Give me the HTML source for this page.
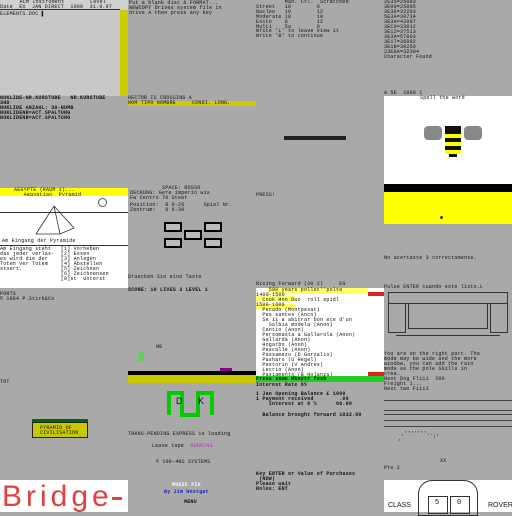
<!DOCTYPE html>
<html><head><meta charset="utf-8"><style>
body{margin:0;width:512px;height:512px;background:#a9a9a9;position:relative;overflow:hidden;font-family:"Liberation Mono",monospace;font-size:5px;line-height:5px;color:#111}
div{position:absolute;white-space:pre}
.t{font-size:5px;letter-spacing:0.2px}
.b{font-weight:bold}
</style></head><body>
<!-- tile 0,0 -->
<div style="left:0;top:0;width:120px;height:96px;background:#c8c8c8"></div>
<div style="left:120px;top:10px;width:8px;height:86px;background:#cccc00"></div>
<div style="left:0;top:0;width:128px;height:10px;background:#d0d0d0"></div>
<div class="t" style="left:10px;top:0">   ACM Instrument        Level</div>
<div class="t" style="left:0;top:5px">Date  EX  JAN DIRECT  1000  31.9.97</div>
<div style="left:0;top:9px;width:120px;height:1px;background:#333"></div>
<div class="t" style="left:0;top:12px">ELEMENTS.DOC ▌</div>
<!-- tile 1,0 -->
<div class="t" style="left:129px;top:1px">Put a blank disc & FORMAT...
NEWCOPY Drives system file in
drive A then press any key</div>
<!-- tile 2,0 -->
<div class="t" style="left:256px;top:0">         Man. Ctl.  Scratched
Street   18        0
Nucleo   19        12
Moderate 18        10
Exito    8         12
Multi    5a        0</div>
<div class="t" style="left:256px;top:29px">Write 'L' to leave view it
Write 'B' to continue</div>
<div style="left:284px;top:136px;width:62px;height:4px;background:#222"></div>
<div class="t" style="left:256px;top:193px">PRESS!</div>
<!-- tile 3,0 -->
<div class="t" style="left:384px;top:0">2E35=25003
3E00=25005
3E36=32203
5E3A=30734
3E3A=42007
3EC0=33012
3E12=37513
3E3A=57003
3E17=36002
3E1B=30250
23E8A=32304
Character Found</div>
<div class="t" style="left:384px;top:91px">A 5E  1000 1</div>
<div style="left:384px;top:96px;width:128px;height:88px;background:#fff"></div>
<div class="t" style="left:420px;top:96px">Spell the word</div>
<!-- bee -->
<div style="left:424px;top:126px;width:18px;height:14px;background:#888;border-radius:4px"></div>
<div style="left:464px;top:126px;width:18px;height:14px;background:#888;border-radius:4px"></div>
<div style="left:445px;top:126px;width:16px;height:8px;background:#111"></div>
<div style="left:445px;top:134px;width:16px;height:4px;background:#ff0"></div>
<div style="left:445px;top:138px;width:16px;height:4px;background:#111"></div>
<div style="left:445px;top:142px;width:16px;height:4px;background:#ff0"></div>
<div style="left:445px;top:146px;width:16px;height:4px;background:#111"></div>
<div style="left:445px;top:150px;width:16px;height:4px;background:#ff0"></div>
<div style="left:449px;top:154px;width:8px;height:3px;background:#111"></div>
<div style="left:384px;top:184px;width:128px;height:8px;background:#000"></div>
<div style="left:384px;top:192px;width:128px;height:32px;background:#ffff00"></div>
<div style="left:440px;top:216px;width:3px;height:3px;background:#333;border-radius:50%"></div>
<!-- tile 0,1 -->
<div class="t b" style="left:0;top:96px">NUKLIDE-NR.KURSTUBE   NR.KURSTUBE
3HD
NUKLIDE ANZAHL: 30-NUMB
NUKLIDENR=ACT.SPALTUNG
NUKLIDENR=ACT.SPALTUNG</div>
<!-- tile 1,1 -->
<div class="t" style="left:128px;top:96px">HECTOR IS CROSSING A</div>
<div style="left:128px;top:101px;width:128px;height:5px;background:#cccc00"></div>
<div class="t" style="left:128px;top:101px">NOM TIPO NOMBRE     CONDI. LONG.</div>
<!-- tile 0,2 -->
<div style="left:0;top:188px;width:128px;height:8px;background:#ffff00"></div>
<div class="t" style="left:14px;top:188px">AEGYPTE (RAUM 1)...
   Aegyptian  Pyramid</div>
<div style="left:0;top:196px;width:128px;height:92px;background:#fff"></div>
<div style="left:0;top:212px;width:128px;height:1px;background:#333"></div>
<div style="left:98px;top:198px;width:7px;height:7px;border:1px solid #555;border-radius:50%"></div>
<svg style="position:absolute;left:30px;top:200px" width="50" height="36"><path d="M24 6 L6 34 L30 34 Z M24 6 L44 28 L30 34" stroke="#333" fill="none" stroke-width="0.8"/></svg>
<div class="t" style="left:2px;top:239px">Am Eingang der Pyramide</div>
<div style="left:0;top:245px;width:128px;height:1px;background:#333"></div>
<div class="t" style="left:0;top:247px">Am Eingang steht   [1] Vorheben
das jeder verlas-  [2] Essen
es wird die der    [3] Anlegen
Toten ver Totem    [4] Abstellen
stoert.            [5] Zeichnen
                   [6] Zeichnensen
                   [0]st  Unterst</div>
<!-- tile 1,2 -->
<div class="t" style="left:130px;top:186px">          SPACE: ROSSO
DECKUNG: Gere imperio wis
Fw Centro 70 Steer</div>
<div class="t" style="left:130px;top:203px">Position:  8 6-26      Spiel Nr.
Zentrum:   8 6-30</div>
<div style="left:164px;top:222px;width:14px;height:6px;border:2px solid #000;background:#bbb"></div>
<div style="left:204px;top:222px;width:14px;height:6px;border:2px solid #000;background:#bbb"></div>
<div style="left:184px;top:230px;width:14px;height:6px;border:2px solid #000;background:#bbb"></div>
<div style="left:164px;top:238px;width:14px;height:6px;border:2px solid #000;background:#bbb"></div>
<div style="left:204px;top:238px;width:14px;height:6px;border:2px solid #000;background:#bbb"></div>
<div class="t" style="left:128px;top:275px">Druecken Sie eine Taste</div>
<div class="t b" style="left:128px;top:288px">SCORE: 10 LIVES 3 LEVEL 1</div>
<div class="t" style="left:156px;top:345px">NE</div>
<div style="left:128px;top:371px;width:128px;height:4px;background:#000"></div>
<div style="left:128px;top:375px;width:128px;height:8px;background:#c8c800"></div>
<div style="left:220px;top:368px;width:12px;height:3px;background:#900090"></div>
<div style="left:138px;top:352px;width:6px;height:10px;background:#6c6"></div>
<svg style="position:absolute;left:166px;top:390px" width="50" height="28"><path d="M3 25 V3 H16 V25 H32 V3 H46 V25" stroke="#00cc00" stroke-width="4" fill="none"/></svg>
<div style="left:176px;top:397px;font-family:'Liberation Sans',sans-serif;font-size:9px;line-height:9px">D</div>
<div style="left:198px;top:397px;font-family:'Liberation Sans',sans-serif;font-size:9px;line-height:9px">K</div>
<div class="t" style="left:128px;top:432px">TRANS-PENDING EXPRESS is loading</div>
<div class="t" style="left:152px;top:444px">Leave tape  <span style="color:#a040a0">RUNNING</span></div>
<div class="t" style="left:156px;top:460px">© 198-4NS SYSTEMS</div>
<div class="t b" style="left:172px;top:483px;color:#fff">MUSIC FIX</div>
<div class="t b" style="left:164px;top:490px;color:#2020c0">By Jim Westgat</div>
<div class="t b" style="left:184px;top:500px">MENU</div>
<!-- tile 0,3 -->
<div class="t" style="left:0;top:292px">PORTS
© 1984 P.Stirk&Co</div>
<div class="t" style="left:0;top:380px">TOT</div>
<div style="left:32px;top:419px;width:56px;height:3px;background:#060"></div>
<div style="left:32px;top:422px;width:56px;height:16px;background:#c8c800;border:1px solid #222;box-sizing:border-box"></div>
<div class="t" style="left:40px;top:426px">PYRAMID OF
CIVILISATION</div>
<div style="left:0;top:480px;width:128px;height:32px;background:#fff"></div>
<div style="left:2px;top:482px;font-family:'Liberation Sans',sans-serif;font-size:30px;line-height:30px;letter-spacing:4px;color:#e04040">Bridge</div>
<div style="left:112px;top:497px;width:10px;height:3px;background:#e04040"></div>
<!-- tile 2,2 -->
<div class="t" style="left:256px;top:282px">Rising Forward (20 2)     EG</div>
<div style="left:256px;top:288px;width:128px;height:88px;background:#fff"></div>
<div style="left:268px;top:288px;width:100px;height:6px;background:#ffff66"></div>
<div style="left:368px;top:292px;width:16px;height:4px;background:#e02020"></div>
<div style="left:256px;top:296px;width:40px;height:5px;background:#ffff66"></div>
<div style="left:256px;top:304px;width:40px;height:5px;background:#ffff66"></div>
<div class="t" style="left:256px;top:288px">    500 years pollst''polte
1400-1500
  Cook Hon Duo  roll epidl
1500-1600
  Pecado (Montpesat)
  Pes santes (Ancn)
  Se ii a abitrar bon ece d'un
    Salbia modela (Anon)
  Cantio (Anon)
  Persomasta a Gallarola (Anon)
  Gallarda (Anon)
  Hogarbo (Anon)
  Pascalle (Anon)
  Passamezo (D Gorzalio)
  Pasharo (U Hegel)
  Pestorin (V Andres)
  Lecrio (Anon)
  Pasiamento (B Holanza)
  Pertenia (L de Maratan)</div>
<div style="left:256px;top:376px;width:128px;height:6px;background:#22cc22"></div>
<div style="left:368px;top:372px;width:16px;height:4px;background:#e02020"></div>
<div class="t b" style="left:256px;top:377px">Press some Mkeytr fosh</div>
<div class="t b" style="left:256px;top:383px">Interest Rate 6%</div>
<div class="t b" style="left:256px;top:392px">1 Jan Opening Balance £ 1000
1 Payment received        .00
    Interest at 6 %      60.00</div>
<div class="t b" style="left:256px;top:413px">  Balance brought forward 1032.00</div>
<div class="t b" style="left:256px;top:472px">Key ENTER or Value of Purchases
 (NOW)
Please wait
Roles: ENT</div>
<!-- tile 3,2 -->
<div class="t" style="left:384px;top:256px">No acertaste 3 correctamente.</div>
<div class="t" style="left:384px;top:285px">Pulse ENTER cuando este listo.L</div>
<div style="left:388px;top:292px;width:118px;height:10px;border:1px solid #333"></div>
<div style="left:388px;top:303px;width:16px;height:28px;border:1px solid #333"></div>
<div style="left:490px;top:303px;width:16px;height:28px;border:1px solid #333"></div>
<div style="left:408px;top:303px;width:78px;height:24px;border:1px solid #333"></div>
<div style="left:396px;top:335px;width:104px;height:1px;background:#333"></div>
<div class="t" style="left:384px;top:352px">You are on the right part. The
mode may be wide and the more
window, you can add the rain
mode as the pole Skills in
crea.
Next Dog Fliii  200
Freight 1...
Next two Fiiii</div>
<div style="left:384px;top:400px;width:128px;height:1px;background:#444"></div>
<div style="left:384px;top:410px;width:128px;height:1px;background:#444"></div>
<div style="left:384px;top:414px;width:128px;height:1px;background:#444"></div>
<div style="left:384px;top:420px;width:128px;height:1px;background:#444"></div>
<div style="left:384px;top:426px;width:128px;height:1px;background:#444"></div>
<div class="t" style="left:398px;top:432px"> ,'''''''...,
,          '</div>
<div class="t" style="left:440px;top:459px">XX</div>
<div class="t" style="left:384px;top:466px">Pts 2</div>
<div style="left:384px;top:480px;width:128px;height:32px;background:#fff"></div>
<div style="left:418px;top:480px;width:58px;height:34px;border:1px solid #333;border-radius:14px 14px 0 0"></div>
<div style="left:428px;top:496px;width:18px;height:16px;border:1px solid #333"></div>
<div style="left:450px;top:496px;width:18px;height:16px;border:1px solid #333"></div>
<div style="left:388px;top:502px;font-family:'Liberation Sans',sans-serif;font-size:7px;line-height:7px">CLASS</div>
<div style="left:488px;top:502px;font-family:'Liberation Sans',sans-serif;font-size:7px;line-height:7px">ROVER</div>
<div style="left:435px;top:500px;font-size:7px;line-height:7px">5</div>
<div style="left:457px;top:500px;font-size:7px;line-height:7px">0</div>
</body></html>
